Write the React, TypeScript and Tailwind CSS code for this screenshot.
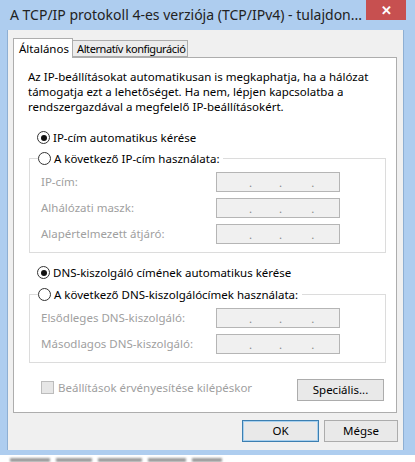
import type { ReactNode } from 'react'

const font = { fontFamily: '"Segoe UI", "Noto Sans", sans-serif' }

function Radio({ checked }: { checked?: boolean }) {
  return (
    <span className="w-[13px] h-[13px] rounded-full border border-[#333] bg-white flex items-center justify-center shrink-0">
      {checked && <span className="w-[6px] h-[6px] rounded-full bg-[#111]" />}
    </span>
  )
}

function IpBox() {
  return (
    <div className="w-[124px] h-[20px] border border-[#b5b5b5] bg-[#f0f0f0] flex items-end pb-[3px] text-[#8a8a8a] leading-none">
      <span className="ml-[32px]">.</span>
      <span className="ml-[27px]">.</span>
      <span className="ml-[29px]">.</span>
    </div>
  )
}

function Field({ label }: { label: string }) {
  return (
    <div className="flex items-center h-[20px]">
      <span className="w-[175px] text-[#a0a0a0]">{label}</span>
      <IpBox />
    </div>
  )
}

function Group({ legend, children }: { legend: string; children: ReactNode }) {
  return (
    <fieldset className="border border-[#dcdcdc] mx-[15px] w-[357px] pb-[8px]">
      <legend className="ml-[8px] pr-[4px] flex items-center gap-[3px] h-[15px]">
        <Radio />
        <span>{legend}</span>
      </legend>
      <div className="pl-[11px]">{children}</div>
    </fieldset>
  )
}

function Button({ children, focused, className = '' }: { children: ReactNode; focused?: boolean; className?: string }) {
  return (
    <div
      className={`h-[22px] flex items-center justify-center border bg-[#e9e9e9] ${
        focused ? 'border-[#3c7fb1] shadow-[inset_0_0_0_1px_#a8d0ee]' : 'border-[#acacac]'
      } ${className}`}
    >
      {children}
    </div>
  )
}

export default function App() {
  return (
    <div className="w-[415px] h-[462px] bg-white overflow-hidden text-[11.5px] text-black" style={font}>
      <div className="bg-[#aecdef] pl-[7px] pb-[5px] w-[422px]">
        {/* title bar */}
        <div className="h-[30px] flex items-start">
          <span className="pl-[3px] pt-[5px] text-[14px] text-[#222] leading-[20px] whitespace-nowrap w-[359px] overflow-hidden">
            A TCP/IP protokoll 4-es verziója (TCP/IPv4) - tulajdon...
          </span>
          <div className="w-[40px] h-[20px] bg-[#c75050] flex items-center justify-center text-white text-[13px] font-bold leading-none">
            ✕
          </div>
        </div>

        {/* client */}
        <div className="bg-[#f0f0f0] w-[397px] h-[420px] border-l border-r border-[#8eafd3] pl-[5px] pt-[8px]">
          <div className="flex items-end h-[19px]">
            <div className="h-[20px] w-[60px] bg-white border border-b-0 border-[#adadad] pl-[5px] pt-[1px] relative z-10 -mb-[1px] whitespace-nowrap">
              Általános
            </div>
            <div className="h-[17px] w-[115px] bg-[#ececec] border border-l-0 border-[#adadad] pl-[4px] leading-[15px] whitespace-nowrap text-[11px] tracking-[-0.4px] overflow-hidden">
              Alternatív konfiguráció
            </div>
          </div>

          <div className="w-[384px] h-[356px] bg-white border border-[#adadad] pt-[11px]">
            <p className="pl-[14px] leading-[15px] whitespace-nowrap">
              Az IP-beállításokat automatikusan is megkaphatja, ha a hálózat
              <br />
              támogatja ezt a lehetőséget. Ha nem, lépjen kapcsolatba a
              <br />
              rendszergazdával a megfelelő IP-beállításokért.
            </p>

            <div className="flex items-center gap-[3px] pl-[23px] mt-[16px] h-[15px]">
              <Radio checked />
              <span>IP-cím automatikus kérése</span>
            </div>

            <div className="mt-[6px]">
              <Group legend="A következő IP-cím használata:">
                <div className="flex flex-col gap-[6px] pt-[6px]">
                  <Field label="IP-cím:" />
                  <Field label="Alhálózati maszk:" />
                  <Field label="Alapértelmezett átjáró:" />
                </div>
              </Group>
            </div>

            <div className="flex items-center gap-[3px] pl-[23px] mt-[12px] h-[15px]">
              <Radio checked />
              <span>DNS-kiszolgáló címének automatikus kérése</span>
            </div>

            <div className="mt-[7px]">
              <Group legend="A következő DNS-kiszolgálócímek használata:">
                <div className="flex flex-col gap-[6px] pt-[6px]">
                  <Field label="Elsődleges DNS-kiszolgáló:" />
                  <Field label="Másodlagos DNS-kiszolgáló:" />
                </div>
              </Group>
            </div>

            <div className="flex items-start mt-[16px] pl-[27px] pr-[12px]">
              <span className="mt-[2px] w-[13px] h-[13px] border border-[#bcbcbc] bg-[#e6e6e6]" />
              <span className="ml-[4px] text-[#a0a0a0] leading-[17px]">Beállítások érvényesítése kilépéskor</span>
              <Button className="ml-auto w-[87px]">Speciális...</Button>
            </div>
          </div>

          <div className="flex justify-end gap-[5px] pr-[5px] mt-[7px]">
            <Button focused className="w-[77px]">OK</Button>
            <Button className="w-[74px]">Mégse</Button>
          </div>
        </div>
      </div>
      {/* blurred window content behind, cut off at the bottom edge */}
      <div className="flex gap-[6px] pl-[10px] pt-[3px]">
        <div className="w-[40px] h-[4px] bg-[#9a9a9a] blur-[1px]" />
        <div className="w-[36px] h-[4px] bg-[#9a9a9a] blur-[1px]" />
        <div className="w-[44px] h-[4px] bg-[#9a9a9a] blur-[1px]" />
        <div className="w-[38px] h-[4px] bg-[#9a9a9a] blur-[1px]" />
        <div className="w-[30px] h-[4px] bg-[#9a9a9a] blur-[1px]" />
      </div>
    </div>
  )
}
